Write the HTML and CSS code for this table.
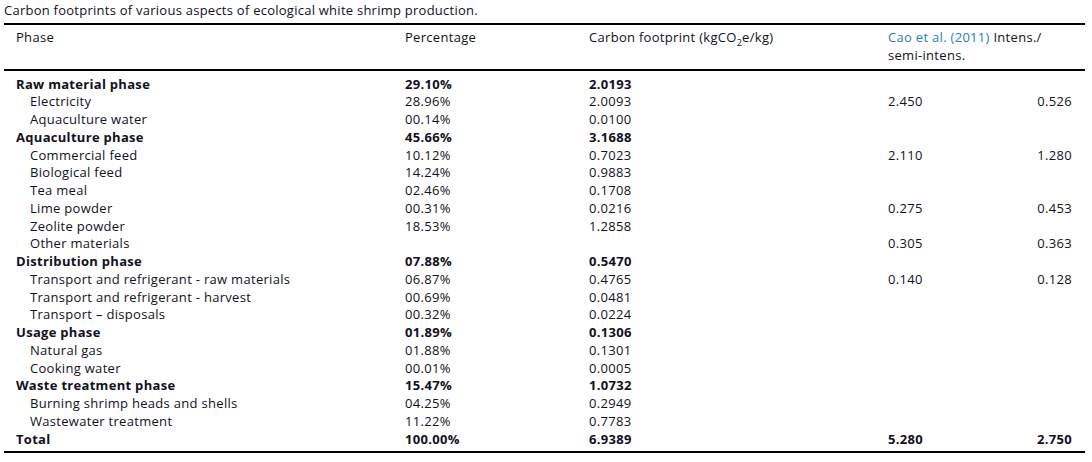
FILE: index.html
```html
<!DOCTYPE html>
<html>
<head>
<meta charset="utf-8">
<link rel="stylesheet" href="styles.css">
</head>
<body>
<div class="caption">Carbon footprints of various aspects of ecological white shrimp production.</div>
<table class="tbl">
  <colgroup>
    <col class="c1"><col class="c2"><col class="c3"><col class="c4"><col class="c5">
  </colgroup>
  <thead>
    <tr>
      <th>Phase</th>
      <th>Percentage</th>
      <th>Carbon footprint (kgCO<sub>2</sub>e/kg)</th>
      <th colspan="2"><span class="link">Cao et al. (2011)</span> Intens./ semi-intens.</th>
    </tr>
  </thead>
  <tbody>
    <tr class="grp first"><td>Raw material phase</td><td>29.10%</td><td>2.0193</td><td></td><td></td></tr>
    <tr><td class="sub">Electricity</td><td>28.96%</td><td>2.0093</td><td>2.450</td><td class="r">0.526</td></tr>
    <tr><td class="sub">Aquaculture water</td><td>00.14%</td><td>0.0100</td><td></td><td></td></tr>
    <tr class="grp"><td>Aquaculture phase</td><td>45.66%</td><td>3.1688</td><td></td><td></td></tr>
    <tr><td class="sub">Commercial feed</td><td>10.12%</td><td>0.7023</td><td>2.110</td><td class="r">1.280</td></tr>
    <tr><td class="sub">Biological feed</td><td>14.24%</td><td>0.9883</td><td></td><td></td></tr>
    <tr><td class="sub">Tea meal</td><td>02.46%</td><td>0.1708</td><td></td><td></td></tr>
    <tr><td class="sub">Lime powder</td><td>00.31%</td><td>0.0216</td><td>0.275</td><td class="r">0.453</td></tr>
    <tr><td class="sub">Zeolite powder</td><td>18.53%</td><td>1.2858</td><td></td><td></td></tr>
    <tr><td class="sub">Other materials</td><td></td><td></td><td>0.305</td><td class="r">0.363</td></tr>
    <tr class="grp"><td>Distribution phase</td><td>07.88%</td><td>0.5470</td><td></td><td></td></tr>
    <tr><td class="sub">Transport and refrigerant - raw materials</td><td>06.87%</td><td>0.4765</td><td>0.140</td><td class="r">0.128</td></tr>
    <tr><td class="sub">Transport and refrigerant - harvest</td><td>00.69%</td><td>0.0481</td><td></td><td></td></tr>
    <tr><td class="sub">Transport &ndash; disposals</td><td>00.32%</td><td>0.0224</td><td></td><td></td></tr>
    <tr class="grp"><td>Usage phase</td><td>01.89%</td><td>0.1306</td><td></td><td></td></tr>
    <tr><td class="sub">Natural gas</td><td>01.88%</td><td>0.1301</td><td></td><td></td></tr>
    <tr><td class="sub">Cooking water</td><td>00.01%</td><td>0.0005</td><td></td><td></td></tr>
    <tr class="grp"><td>Waste treatment phase</td><td>15.47%</td><td>1.0732</td><td></td><td></td></tr>
    <tr><td class="sub">Burning shrimp heads and shells</td><td>04.25%</td><td>0.2949</td><td></td><td></td></tr>
    <tr><td class="sub">Wastewater treatment</td><td>11.22%</td><td>0.7783</td><td></td><td></td></tr>
    <tr class="grp last"><td>Total</td><td>100.00%</td><td>6.9389</td><td>5.280</td><td class="r">2.750</td></tr>
  </tbody>
</table>
</body>
</html>
```

FILE: styles.css
```css
html, body {
  margin: 0;
  padding: 0;
  background: #fff;
}
body {
  font-family: "Open Sans", "Lato", sans-serif;
  color: #111122;
}
.caption {
  font-size: 13px;
  letter-spacing: 0.25px;
  line-height: 16px;
  padding: 2px 0 0 4px;
  height: 21px;
}
.tbl {
  margin-left: 4px;
  width: 1081px;
  border-collapse: collapse;
  table-layout: fixed;
  font-size: 13px;
  letter-spacing: 0.3px;
  border-top: 2px solid #000;
  border-bottom: 2px solid #000;
}
.c1 { width: 389px; }
.c2 { width: 184px; }
.c3 { width: 299px; }
.c4 { width: 120px; }
.c5 { width: 89px; }
.tbl th {
  font-weight: normal;
  text-align: left;
  vertical-align: top;
  padding: 4px 0 4px 12px;
  line-height: 17.75px;
  border-bottom: 2px solid #000;
}
.tbl th sub {
  font-size: 9px;
  line-height: 0;
}
.tbl th[colspan] {
  padding-right: 30px;
}
.link {
  color: #2b7db8;
}
.tbl td {
  padding: 0 0 0 12px;
  height: 17.75px;
  line-height: 17.75px;
  white-space: nowrap;
}
.tbl td.sub {
  padding-left: 26px;
}
.tbl td.r {
  text-align: right;
  padding-right: 13px;
}
.grp td {
  font-weight: bold;
}
.first td {
  padding-top: 5px;
}
.last td {
  padding-bottom: 3px;
}
```
